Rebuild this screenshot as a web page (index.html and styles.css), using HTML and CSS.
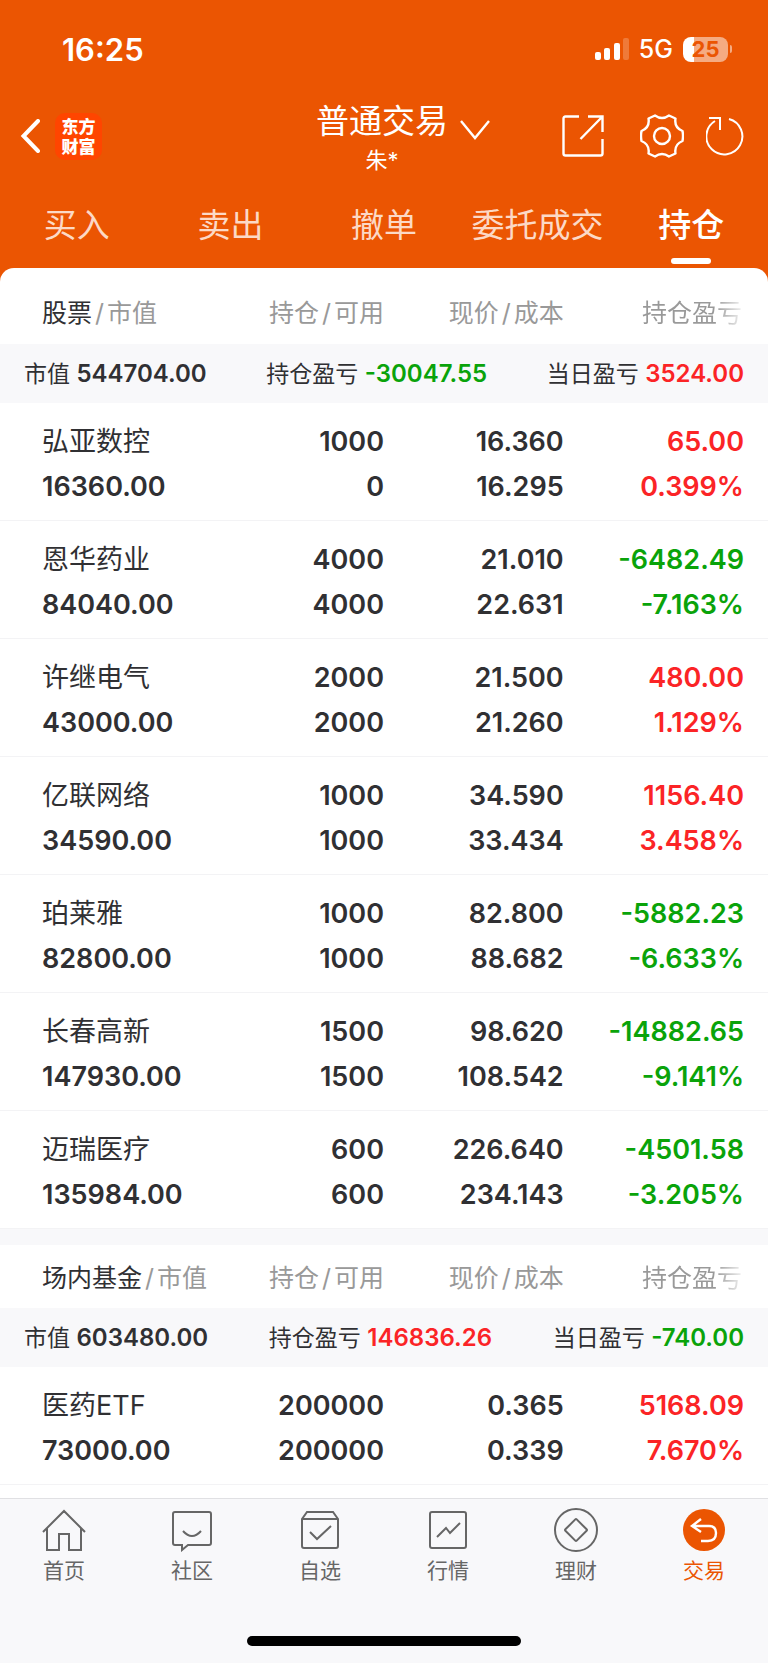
FILE: index.html
```html
<!DOCTYPE html>
<html lang="zh-CN">
<head>
<meta charset="utf-8">
<meta name="viewport" content="width=device-width, initial-scale=1">
<title>普通交易 - 持仓</title>
<link rel="stylesheet" href="styles.css">
</head>
<body>
<header class="header">
  <div class="status">
    <time class="status-time">16:25</time>
    <div class="status-right">
      <svg class="signal" viewBox="0 0 34 24" width="34" height="24" fill="#fff" aria-hidden="true"><rect x="0" y="15" width="6" height="8" rx="2"/><rect x="9" y="11" width="6" height="12" rx="2"/><rect x="19" y="6" width="6" height="17" rx="2"/><rect x="28" y="1" width="6" height="22" rx="2" opacity=".22"/></svg>
      <span class="network">5G</span>
      <span class="battery"><span class="battery-body">25</span><span class="battery-tip"></span></span>
    </div>
  </div>
  <div class="nav">
    <div class="nav-left">
      <button class="icon-btn" aria-label="返回"><svg viewBox="0 0 20 34" width="20" height="34" fill="none" stroke="#fff" stroke-width="4"><path d="M18 2 3.500 17 18 32" stroke-linecap="round"/></svg></button>
      <a class="logo" href="#"><span>东方</span><span>财富</span></a>
    </div>
    <button class="account">
      <span class="account-title">普通交易</span>
      <svg class="account-arrow" viewBox="0 0 30 20" width="30" height="20" fill="none" stroke="#fff" stroke-width="2.400"><path d="M1 1l14 17L29 1"/></svg>
      <span class="account-user">朱*</span>
    </button>
    <div class="nav-right">
      <button class="icon-btn share" aria-label="分享"><svg viewBox="0 0 42 42" width="42" height="42" fill="none" stroke="#fff" stroke-width="2.400"><path d="M17 1.500H3.500q-2 0-2 2v35q0 2 2 2h35q2 0 2-2V24M26 1.500h14.500V17M40 2 18.500 24"/></svg></button>
      <button class="icon-btn gear" aria-label="设置"><svg viewBox="0 0 44 44" width="44" height="44" fill="none" stroke="#fff" stroke-width="2.400" stroke-linejoin="round"><path d="M15 1.500Q22 6.500 29 1.500L35.500 4.500Q34 13.500 42.500 17Q43.500 22 42.500 27Q34 30.500 35.500 39.500L29 42.500Q22 37.500 15 42.500L8.500 39.500Q10 30.500 1.500 27Q.5 22 1.500 17Q10 13.500 8.500 4.500Z"/><circle cx="22" cy="22" r="8"/></svg></button>
      <button class="icon-btn" aria-label="刷新"><svg viewBox="0 0 38 40" width="38" height="40" fill="none" stroke="#fff" stroke-width="2"><path d="M23 3A18 18 0 1 1 9 5M3 2h11v12"/></svg></button>
    </div>
  </div>
  <nav class="tabs">
    <a href="#">买入</a>
    <a href="#">卖出</a>
    <a href="#">撤单</a>
    <a href="#">委托成交</a>
    <a class="active" href="#" aria-current="page">持仓</a>
  </nav>
</header>

<main class="sheet">
  <table class="holdings">
    <thead>
      <tr><th class="first"><b>股票</b><i>/</i>市值</th><th>持仓<i>/</i>可用</th><th>现价<i>/</i>成本</th><th class="faded">持仓盈亏</th></tr>
    </thead>
    <tbody>
      <tr class="summary"><td colspan="4"><div class="totals"><span>市值 <b>544704.00</b></span><span>持仓盈亏 <b class="down">-30047.55</b></span><span>当日盈亏 <b class="up">3524.00</b></span></div></td></tr>
      <tr><td><span class="name">弘亚数控</span><span>16360.00</span></td><td><span>1000</span><span>0</span></td><td><span>16.360</span><span>16.295</span></td><td class="up"><span>65.00</span><span>0.399%</span></td></tr>
      <tr><td><span class="name">恩华药业</span><span>84040.00</span></td><td><span>4000</span><span>4000</span></td><td><span>21.010</span><span>22.631</span></td><td class="down"><span>-6482.49</span><span>-7.163%</span></td></tr>
      <tr><td><span class="name">许继电气</span><span>43000.00</span></td><td><span>2000</span><span>2000</span></td><td><span>21.500</span><span>21.260</span></td><td class="up"><span>480.00</span><span>1.129%</span></td></tr>
      <tr><td><span class="name">亿联网络</span><span>34590.00</span></td><td><span>1000</span><span>1000</span></td><td><span>34.590</span><span>33.434</span></td><td class="up"><span>1156.40</span><span>3.458%</span></td></tr>
      <tr><td><span class="name">珀莱雅</span><span>82800.00</span></td><td><span>1000</span><span>1000</span></td><td><span>82.800</span><span>88.682</span></td><td class="down"><span>-5882.23</span><span>-6.633%</span></td></tr>
      <tr><td><span class="name">长春高新</span><span>147930.00</span></td><td><span>1500</span><span>1500</span></td><td><span>98.620</span><span>108.542</span></td><td class="down"><span>-14882.65</span><span>-9.141%</span></td></tr>
      <tr><td><span class="name">迈瑞医疗</span><span>135984.00</span></td><td><span>600</span><span>600</span></td><td><span>226.640</span><span>234.143</span></td><td class="down"><span>-4501.58</span><span>-3.205%</span></td></tr>
    </tbody>
  </table>
  <table class="holdings funds">
    <thead>
      <tr><th class="first"><b>场内基金</b><i>/</i>市值</th><th>持仓<i>/</i>可用</th><th>现价<i>/</i>成本</th><th class="faded">持仓盈亏</th></tr>
    </thead>
    <tbody>
      <tr class="summary"><td colspan="4"><div class="totals"><span>市值 <b>603480.00</b></span><span>持仓盈亏 <b class="up">146836.26</b></span><span>当日盈亏 <b class="down">-740.00</b></span></div></td></tr>
      <tr><td><span class="name">医药ETF</span><span>73000.00</span></td><td><span>200000</span><span>200000</span></td><td><span>0.365</span><span>0.339</span></td><td class="up"><span>5168.09</span><span>7.670%</span></td></tr>
    </tbody>
  </table>
</main>

<footer class="bottom">
  <nav class="menu">
    <a href="#"><svg viewBox="0 0 44 44" width="44" height="44"><path d="M1 24 22 3l21 21M5 20v22h12V26h10v16h12V20"/></svg>首页</a>
    <a href="#"><svg viewBox="0 0 44 44" width="44" height="44"><path d="M5 4h34q2 0 2 2v29q0 2-2 2H18l-6 5v-5H5q-2 0-2-2V6q0-2 2-2ZM13 23q9 10 18 0"/></svg>社区</a>
    <a href="#"><svg viewBox="0 0 44 44" width="44" height="44"><path d="M4 11 9 4h26l5 7v27q0 2-2 2H6q-2 0-2-2ZM4 11h36M12 24l7 7 14-13"/></svg>自选</a>
    <a href="#"><svg viewBox="0 0 44 44" width="44" height="44"><rect x="4" y="4" width="36" height="36" rx="2"/><path d="M11 29l9-9 4 5 10-10"/></svg>行情</a>
    <a href="#"><svg viewBox="0 0 44 44" width="44" height="44"><circle cx="22" cy="22" r="21"/><rect x="14" y="14" width="16" height="16" rx="1" transform="rotate(45 22 22)"/></svg>理财</a>
    <a class="current" href="#" aria-current="page"><svg viewBox="0 0 44 44" width="44" height="44"><circle class="disc" cx="22" cy="22" r="21"/><path class="mark" d="M19 11 10 18l9 6M10 18h17q7 0 7 7 0 8-8 8h-7"/></svg>交易</a>
  </nav>
  <div class="home-bar"></div>
</footer>
</body>
</html>
```
FILE: styles.css
```css
:root {
  --brand: #eb5502;
  --ink: #303033;
  --muted: #999;
  --panel: #f8f8fa;
  --up: #fb2426;
  --down: #0aa30a;
}

* { box-sizing: border-box; }

body {
  margin: 0;
  min-height: 100vh;
  display: flex;
  flex-direction: column;
  background: var(--brand);
  color: var(--ink);
  font-family: Inter, "Noto Sans CJK SC", sans-serif;
}

a { color: inherit; text-decoration: none; }
button { padding: 0; border: 0; background: none; color: inherit; font: inherit; }
svg { display: block; }
i { font-style: normal; margin: 0 3px; }

.header { color: #fff; }

.status {
  display: flex;
  justify-content: space-between;
  align-items: center;
  height: 95px;
  padding: 3px 36px 0 62px;
}
.status-time { font-size: 31px; font-weight: 600; }
.status-right { display: flex; align-items: center; gap: 10px; }
.network { font-size: 25px; font-weight: 500; }
.battery { display: flex; align-items: center; gap: 2px; }
.battery-body {
  width: 45px;
  border-radius: 8px;
  background: linear-gradient(90deg, #fff 25%, #f5ab82 25%);
  color: var(--brand);
  font-size: 22px;
  font-weight: 700;
  line-height: 25px;
  text-align: center;
}
.battery-tip { width: 2px; height: 8px; border-radius: 0 2px 2px 0; background: #f5ab82; }

.nav {
  display: grid;
  grid-template-columns: 1fr auto 1fr;
  align-items: center;
  height: 82px;
  padding: 0 24px 0 20px;
}
.nav-left { display: flex; align-items: center; gap: 15px; }
.logo {
  display: flex;
  flex-direction: column;
  align-items: center;
  width: 47px;
  padding: 3px 0 4px;
  border-radius: 10px;
  background: #ff4500;
  font-family: "Noto Sans CJK SC", sans-serif;
  font-size: 17px;
  font-weight: 900;
  line-height: 20px;
}
.account {
  display: grid;
  grid-template-columns: 42px auto 42px;
  justify-items: center;
  align-items: center;
  padding-top: 4px;
}
.account-title { grid-column: 2; font-size: 33px; line-height: 44px; }
.account-arrow { grid-column: 3; justify-self: end; margin-top: 18px; }
.account-user { grid-column: 2; font-size: 22px; line-height: 34px; }
.nav-right { display: flex; align-items: center; justify-content: flex-end; }
.share { margin-right: 36px; }
.gear { margin-right: 22px; }

.tabs {
  display: grid;
  grid-template-columns: repeat(5, 1fr);
  height: 91px;
  color: #fcd9c6;
  font-size: 33px;
  line-height: 48px;
  text-align: center;
}
.tabs a { padding-top: 24px; }
.tabs .active { color: #fff; font-weight: 500; }
.tabs .active::after {
  content: "";
  display: block;
  width: 40px;
  height: 6px;
  margin: 9px auto 0;
  border-radius: 3px;
  background: #fff;
}

.sheet {
  flex: 1;
  border-radius: 14px 14px 0 0;
  background: #fff;
}
.holdings {
  width: 100%;
  border-collapse: separate;
  border-spacing: 0;
  table-layout: fixed;
}
.holdings th {
  width: 23.4%;
  height: 76px;
  padding: 14px 0 0;
  color: var(--muted);
  font-size: 25px;
  font-weight: 400;
  line-height: 36px;
  text-align: right;
  white-space: nowrap;
}
.holdings th.first { width: 31%; padding-left: 42px; text-align: left; }
.holdings th:nth-child(2) { width: 19%; }
.holdings .faded {
  width: 26.6%;
  padding-right: 26px;
  background: linear-gradient(90deg, var(--muted) 74%, #eee 87%);
  background-clip: text;
  color: transparent;
}
.first b { color: var(--ink); font-weight: 400; }
.funds { border-top: 16px solid var(--panel); }
.funds th { height: 63px; padding-top: 2px; }

.holdings td {
  height: 118px;
  padding: 4px 0 0;
  border-bottom: 1px solid #f3f3f5;
  font-size: 27px;
  font-weight: 600;
  text-align: right;
}
.holdings td:first-child { padding-left: 42px; text-align: left; }
.holdings td:last-child { padding-right: 24px; }
.holdings td > span { display: block; line-height: 45px; }
.holdings td > .name { font-weight: 400; }
.holdings .summary td { height: 59px; padding: 0 24px; border: 0; background: var(--panel); }
.totals {
  display: flex;
  justify-content: space-between;
  font-size: 23px;
  font-weight: 400;
  line-height: 36px;
}
.totals b { font-size: 24px; font-weight: 600; }
.up { color: var(--up); }
.down { color: var(--down); }

.bottom {
  padding: 9px 0 17px;
  border-top: 1px solid #e0e0e3;
  background: var(--panel);
}
.menu {
  display: grid;
  grid-template-columns: repeat(6, 1fr);
  color: #666;
  font-size: 21px;
  line-height: 38px;
}
.menu a { display: flex; flex-direction: column; align-items: center; }
.menu svg { fill: none; stroke: #666; stroke-width: 2; }
.menu .current { color: var(--brand); }
.menu .disc { fill: var(--brand); stroke: none; }
.menu .mark { stroke: #fff; stroke-width: 2.400; }
.home-bar {
  width: 274px;
  height: 10px;
  margin: 46px auto 0;
  border-radius: 5px;
  background: #000;
}
```
